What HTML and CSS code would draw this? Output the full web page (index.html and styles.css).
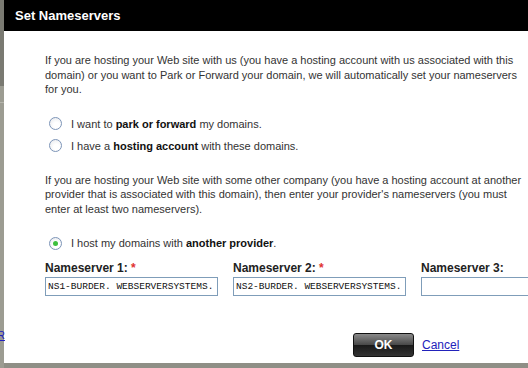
FILE: index.html
```html
<!DOCTYPE html>
<html>
<head>
<meta charset="utf-8">
<link rel="stylesheet" href="styles.css">
</head>
<body>
<div class="screen">
  <div class="side">
    <div class="side-top"></div>
    <div class="side-mid"></div>
    <div class="side-link">R</div>
  </div>
  <div class="dialog">
    <div class="titlebar">Set Nameservers</div>
    <div class="content">
      <p class="para">If you are hosting your Web site with us (you have a hosting account with us associated with this domain) or you want to Park or Forward your domain, we will automatically set your nameservers for you.</p>
      <div class="radios">
        <label class="radio"><span class="rb"></span><span class="rtext">I want to <b>park or forward</b> my domains.</span></label>
        <label class="radio"><span class="rb"></span><span class="rtext">I have a <b>hosting account</b> with these domains.</span></label>
      </div>
      <p class="para para2">If you are hosting your Web site with some other company (you have a hosting account at another provider that is associated with this domain), then enter your provider's nameservers (you must enter at least two nameservers).</p>
      <label class="radio radio3"><span class="rb on"></span><span class="rtext">I host my domains with <b>another provider</b>.</span></label>
      <div class="fields">
        <div class="field">
          <div class="flabel">Nameserver 1: <span class="req">*</span></div>
          <div class="input">NS1-BURDER. WEBSERVERSYSTEMS. COM</div>
        </div>
        <div class="field">
          <div class="flabel">Nameserver 2: <span class="req">*</span></div>
          <div class="input">NS2-BURDER. WEBSERVERSYSTEMS. COM</div>
        </div>
        <div class="field">
          <div class="flabel">Nameserver 3:</div>
          <div class="input"></div>
        </div>
      </div>
      <div class="actions">
        <span class="ok">OK</span>
        <a class="cancel" href="#">Cancel</a>
      </div>
    </div>
  </div>
</div>
</body>
</html>
```
FILE: styles.css
```css
html, body {
  margin: 0;
  padding: 0;
  width: 528px;
  height: 368px;
  overflow: hidden;
  background: #8f8f86;
  font-family: "Liberation Sans", Arial, sans-serif;
}
.screen {
  display: flex;
  width: 528px;
  height: 368px;
}
.side {
  width: 4px;
  flex: none;
  display: flex;
  flex-direction: column;
  background: #9c9c92;
  position: relative;
}
.side-top {
  height: 86px;
  background: #7a7a72;
}
.side-mid {
  height: 16px;
  border-bottom: 1px solid #b5b5ac;
}
.side-link {
  position: absolute;
  top: 329px;
  left: -3px;
  font-size: 11px;
  color: #2020c0;
  text-decoration: underline;
}
.dialog {
  flex: none;
  width: 524px;
  height: 363px;
  background: #fff;
  display: flex;
  flex-direction: column;
  overflow: hidden;
}
.titlebar {
  height: 31px;
  background: #000;
  color: #fff;
  font-weight: bold;
  font-size: 13px;
  line-height: 31px;
  padding-left: 11px;
  flex: none;
}
.content {
  padding: 22px 0 0 41px;
  font-size: 11px;
  color: #333;
}
.para {
  margin: 0;
  line-height: 14.5px;
  width: 480px;
}
.radios {
  margin-top: 20px;
  display: flex;
  flex-direction: column;
  gap: 8px;
}
.radio {
  display: flex;
  align-items: center;
  height: 14px;
  color: #333;
}
.radio b {
  color: #111;
}
.rb {
  width: 11px;
  height: 11px;
  border: 1px solid #7d95b8;
  border-radius: 50%;
  background: radial-gradient(circle at 60% 65%, #fff 30%, #e4e6ea 100%);
  margin: 0 9px 0 4px;
  flex: none;
  position: relative;
}
.rb.on::after {
  content: "";
  position: absolute;
  left: 3px;
  top: 3px;
  width: 5px;
  height: 5px;
  border-radius: 50%;
  background: #3cbf3c;
}
.para2 {
  margin-top: 20px;
}
.radio3 {
  margin-top: 20px;
}
.fields {
  margin-top: 11px;
  display: flex;
  gap: 15px;
}
.field {
  width: 173px;
  flex: none;
}
.flabel {
  font-weight: bold;
  font-size: 12px;
  color: #222;
  height: 14px;
  line-height: 14px;
}
.req {
  color: #e03030;
}
.input {
  margin-top: 2px;
  height: 17px;
  border: 1px solid #7f9db9;
  font-family: "Liberation Mono", "Courier New", monospace;
  font-size: 9.5px;
  line-height: 17px;
  padding-left: 2px;
  white-space: nowrap;
  overflow: hidden;
  color: #111;
  box-sizing: content-box;
  width: 169px;
}
.actions {
  margin-top: 37px;
  display: flex;
  align-items: center;
  padding-left: 308px;
  gap: 8px;
}
.ok {
  width: 59px;
  height: 22px;
  border-radius: 3px;
  background: linear-gradient(#8a8a8a 0%, #4a4a4a 48%, #1a1a1a 52%, #333 100%);
  border: 1px solid #111;
  color: #fff;
  font-weight: bold;
  font-size: 12px;
  display: flex;
  align-items: center;
  justify-content: center;
}
.cancel {
  color: #2222bb;
  font-size: 12px;
}
```
